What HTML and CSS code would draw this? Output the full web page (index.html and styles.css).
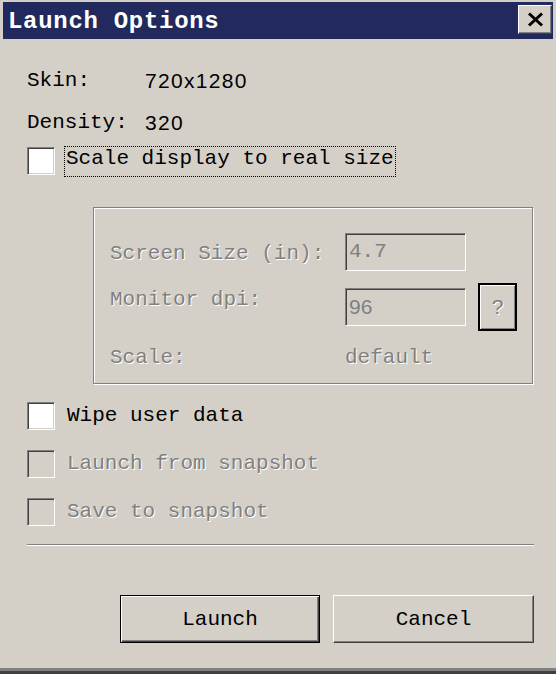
FILE: index.html
```html
<!DOCTYPE html>
<html>
<head>
  <meta charset="UTF-8">
  <title>Launch Options</title>
  <link rel="stylesheet" href="styles.css">
</head>
<body>
  <div class="window">
    <div class="titlebar">
      <span class="title">Launch Options</span>
      <button class="close" aria-label="Close">
        <svg width="17" height="15" viewBox="0 0 17 15">
          <path d="M2 1.5 L15 13.5 M15 1.5 L2 13.5" stroke="#000" stroke-width="3" fill="none"/>
        </svg>
      </button>
    </div>

    <div class="content">
      <div class="info first">
        <span class="info-label">Skin:</span>
        <span class="info-value">720x1280</span>
      </div>
      <div class="info">
        <span class="info-label">Density:</span>
        <span class="info-value">320</span>
      </div>

      <div class="check-row focus-row">
        <span class="check"></span>
        <span class="check-label focused">Scale display to real size</span>
      </div>

      <div class="group">
        <div class="group-row row-size">
          <span class="field-label off">Screen Size (in):</span>
          <span class="field mono">4.7</span>
        </div>
        <div class="group-row row-dpi">
          <span class="field-label off">Monitor dpi:</span>
          <span class="field">96</span>
          <button class="help off">?</button>
        </div>
        <div class="group-row row-scale">
          <span class="field-label off">Scale:</span>
          <span class="off">default</span>
        </div>
      </div>

      <div class="check-row opt">
        <span class="check"></span>
        <span class="check-label">Wipe user data</span>
      </div>
      <div class="check-row opt">
        <span class="check disabled"></span>
        <span class="check-label off">Launch from snapshot</span>
      </div>
      <div class="check-row opt">
        <span class="check disabled"></span>
        <span class="check-label off">Save to snapshot</span>
      </div>

      <div class="separator"></div>

      <div class="actions">
        <button class="btn default">Launch</button>
        <button class="btn">Cancel</button>
      </div>
    </div>
  </div>
</body>
</html>
```

FILE: styles.css
```css
html {
  background-color: #d4d0c8;
}
body {
  margin: 0;
  font-family: "Liberation Mono", monospace;
  font-size: 21px;
  color: #000000;
}
button {
  font-family: inherit;
  font-size: inherit;
  padding: 0;
  margin: 0;
}
.window {
  width: 556px;
  height: 674px;
  box-sizing: border-box;
  padding: 2px 3px 0 3px;
  background-color: #d4d0c8;
  border-bottom: 3px solid #404040;
  box-shadow: inset 0 -3px 0 #808080;
  overflow: hidden;
}
.titlebar {
  height: 37px;
  background-color: #222a5d;
  display: flex;
  align-items: flex-start;
  justify-content: space-between;
}
.title {
  color: #ffffff;
  font-weight: bold;
  font-size: 24px;
  letter-spacing: 0.7px;
  line-height: 34px;
  padding: 3px 0 0 5px;
}
.close {
  width: 34px;
  height: 29px;
  margin: 3px 1px 0 0;
  box-sizing: border-box;
  background-color: #d4d0c8;
  border: 1px solid;
  border-color: #ffffff #404040 #404040 #ffffff;
  box-shadow: inset -1px -1px 0 #808080;
  display: flex;
  align-items: center;
  justify-content: center;
}
.content {
  padding: 0 19px 0 24px;
}
.info {
  display: flex;
  line-height: 28px;
  margin-top: 14px;
}
.info.first {
  margin-top: 28px;
}
.info-label {
  width: 118px;
}
.info-value {
  font-family: "Liberation Sans", sans-serif;
  letter-spacing: 1.3px;
}
.check-row {
  display: flex;
  align-items: flex-start;
}
.check {
  width: 28px;
  height: 28px;
  box-sizing: border-box;
  flex: none;
  background-color: #ffffff;
  border: 1px solid;
  border-color: #808080 #ffffff #ffffff #808080;
  box-shadow: inset 1px 1px 0 #404040, inset -1px -1px 0 #d4d0c8;
}
.check.disabled {
  background-color: #d4d0c8;
}
.check-label {
  line-height: 28px;
  margin-left: 12px;
}
.focus-row {
  margin-top: 9px;
}
.focus-row .check {
  margin-top: 1px;
}
.check-label.focused {
  margin-left: 9px;
  line-height: 24px;
  padding: 0 1px 5px 1px;
  border: 1px dotted #000000;
}
.off {
  color: #808080;
  text-shadow: 1px 1px 0 #ffffff;
}
.group {
  margin: 30px 0 0 66px;
  width: 440px;
  box-sizing: border-box;
  padding: 25px 0 11px 16px;
  border: 1px solid #808080;
  box-shadow: 1px 1px 0 #ffffff, inset 1px 1px 0 #ffffff;
}
.group-row {
  display: flex;
  align-items: flex-start;
}
.field-label {
  width: 235px;
  flex: none;
}
.row-size {
  height: 38px;
}
.row-size .field-label {
  line-height: 38px;
  padding-top: 2px;
}
.row-dpi {
  height: 48px;
  margin-top: 12px;
}
.row-dpi .field-label {
  line-height: 28px;
  padding-top: 3px;
}
.row-dpi .field {
  margin-top: 5px;
}
.row-scale {
  margin-top: 13px;
  line-height: 28px;
}
.field {
  width: 121px;
  height: 38px;
  box-sizing: border-box;
  padding-left: 3px;
  line-height: 36px;
  color: #808080;
  font-family: "Liberation Sans", sans-serif;
  border: 1px solid;
  border-color: #808080 #ffffff #ffffff #808080;
  box-shadow: inset 1px 1px 0 #404040, inset -1px -1px 0 #d4d0c8;
}
.field.mono {
  font-family: "Liberation Mono", monospace;
}
.help {
  width: 39px;
  height: 48px;
  margin-left: 12px;
  box-sizing: border-box;
  background-color: #d4d0c8;
  border: 2px solid #000000;
  box-shadow: inset 1px 1px 0 #ffffff, inset -1px -1px 0 #808080;
  font-family: "Liberation Sans", sans-serif;
}
.opt {
  margin-top: 20px;
}
.group + .opt {
  margin-top: 18px;
}
.separator {
  margin-top: 18px;
  height: 1px;
  background-color: #808080;
  border-bottom: 1px solid #ffffff;
}
.actions {
  display: flex;
  justify-content: flex-end;
  gap: 13px;
  margin-top: 49px;
}
.btn {
  width: 201px;
  height: 48px;
  box-sizing: border-box;
  background-color: #d4d0c8;
  color: #000000;
  border: 1px solid;
  border-color: #ffffff #404040 #404040 #ffffff;
  box-shadow: inset -1px -1px 0 #808080;
}
.btn.default {
  width: 200px;
  border: 1px solid #000000;
  box-shadow: inset 1px 1px 0 #ffffff, inset -1px -1px 0 #404040, inset -2px -2px 0 #808080;
}
```
